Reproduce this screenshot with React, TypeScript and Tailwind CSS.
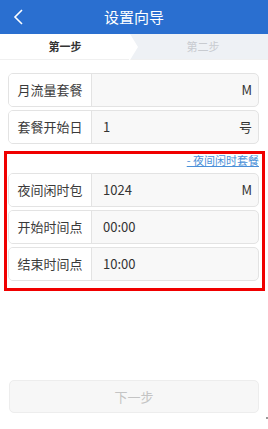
import React from "react";

const font = { fontFamily: '"Noto Sans CJK SC", "Noto Sans", sans-serif' };

function Row({ label, value, unit }: { label: string; value: string; unit?: string }) {
  return (
    <div className="flex h-[34px] rounded-[5px] border border-[#e3e3e3] bg-[#f8f8f8] overflow-hidden">
      <div className="w-[83px] shrink-0 flex items-center justify-center bg-white border-r border-[#e3e3e3] text-[13px] text-[#3a3a3a]">
        {label}
      </div>
      <div className="flex-1 flex items-center justify-between pl-[11px] pr-[6px] text-[13px] text-[#333]">
        <span>{value}</span>
        <span>{unit ?? ""}</span>
      </div>
    </div>
  );
}

export default function App() {
  return (
    <div className="relative w-[268px] h-[429px] bg-white overflow-hidden" style={font}>
      <div className="h-[34px] bg-[#2a6fd0] flex items-center relative">
        <svg className="absolute left-[12px] top-[9px]" width="12" height="16" viewBox="0 0 12 16">
          <path d="M10 1 L3 8 L10 15" fill="none" stroke="white" strokeWidth="1.6" />
        </svg>
        <div className="w-full text-center text-white text-[15px]">设置向导</div>
      </div>
      <div className="h-[26px] flex relative bg-[#eef1f5] border-b border-[#f0f0f0]">
        <div className="w-[130px] flex items-center justify-center text-[11px] text-[#333] bg-white font-bold">第一步</div>
        <svg className="absolute left-[129px] top-0" width="10" height="26" viewBox="0 0 10 26">
          <path d="M0 0 L1 0 L9 13 L1 26 L0 26 Z" fill="white" />
        </svg>
        <div className="flex-1 flex items-center justify-center text-[11px] text-[#c8cbd0] pl-[8px]">第二步</div>
      </div>
      <div className="px-[8px] pr-[9px] pt-[13px] flex flex-col gap-[3px]">
        <Row label="月流量套餐" value="" unit="M" />
        <Row label="套餐开始日" value="1" unit="号" />
      </div>
      <div className="mt-[7px] ml-[4px] mr-[3px] border-[3px] border-[#f00000] pl-[1px] pr-[3px] pb-[7px]">
        <div className="h-[13px] flex items-center justify-end">
          <span className="text-[11px] leading-[13px] text-[#4a8fd8] underline">- 夜间闲时套餐</span>
        </div>
        <div className="mt-[6px] flex flex-col gap-[3px]">
          <Row label="夜间闲时包" value="1024" unit="M" />
          <Row label="开始时间点" value="00:00" />
          <Row label="结束时间点" value="10:00" />
        </div>
      </div>
      <div className="mx-[9px] mt-[89px] h-[33px] rounded-[5px] border border-[#ededed] bg-[#f7f7f7] flex items-center justify-center text-[13px] text-[#c4c4c4]">
        下一步
      </div>
      <div className="absolute left-[266px] top-[417px] w-[2px] h-[2px] bg-[#999]" />
    </div>
  );
}
